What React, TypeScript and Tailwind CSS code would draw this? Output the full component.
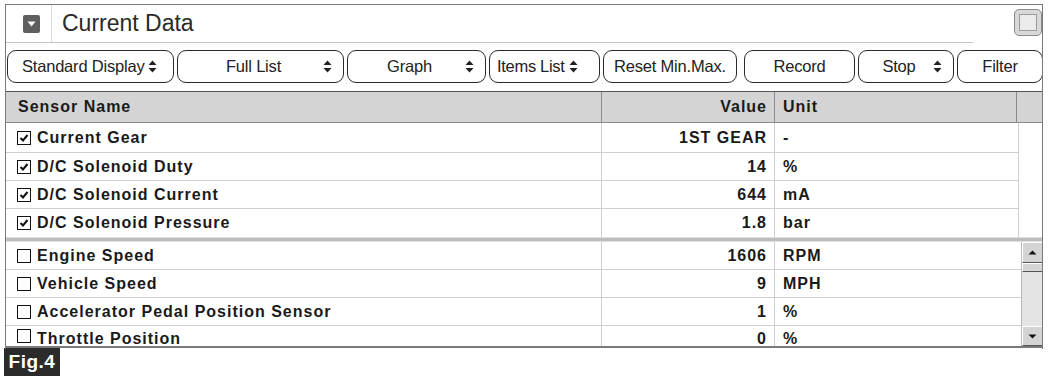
import React from "react";

const Arrows = () => (
  <svg width="9" height="13" viewBox="0 0 9 13" className="shrink-0">
    <path d="M4.5 0.5 L8.5 5 L0.5 5 Z" fill="#222" />
    <path d="M4.5 12.5 L8.5 8 L0.5 8 Z" fill="#222" />
  </svg>
);

const Btn = ({ label, w, drop, align = "center" }: { label: string; w: number; drop?: boolean; align?: string }) => (
  <div
    className="h-[33px] shrink-0 rounded-[9px] border border-[#2a2a2a] flex items-center text-[16.5px] text-[#222] bg-white tracking-[-0.2px]"
    style={{ width: w }}
  >
    {drop ? (
      align === "left" ? (
        <div className="flex items-center gap-[4px] pl-[14px]">
          <span>{label}</span>
          <Arrows />
        </div>
      ) : (
        <>
          <span className="flex-1 text-center pl-[6px]">{label}</span>
          <span className="pr-[11px] flex"><Arrows /></span>
        </>
      )
    ) : (
      <span className="flex-1 text-center">{label}</span>
    )}
  </div>
);

const Check = ({ on }: { on: boolean }) => (
  <div className="w-[14px] h-[14px] border-[1.5px] border-[#111] bg-white flex items-center justify-center shrink-0">
    {on && (
      <svg width="10" height="10" viewBox="0 0 10 10">
        <path d="M1.5 5 L4 7.5 L8.5 2" stroke="#111" strokeWidth="2" fill="none" />
      </svg>
    )}
  </div>
);

const Row = ({ name, value, unit, on, last, h = 28, top }: { name: string; value: string; unit: string; on: boolean; last?: boolean; h?: number; top?: boolean }) => (
  <div className={`flex ${last ? "" : "border-b border-[#cfcfcf]"} ${top ? "items-start" : ""}`} style={{ height: h + (last ? 0 : 1) }}>
    <div className={`w-[597px] h-full flex gap-[6px] pl-[12px] border-r border-[#cfcfcf] ${top ? "items-start pt-[3px]" : "items-center"}`}>
      <Check on={on} />
      <span className={top ? "-mt-[2px]" : ""}>{name}</span>
    </div>
    <div className={`w-[173px] h-full flex justify-end pr-[7px] border-r border-[#cfcfcf] ${top ? "items-start pt-[1px]" : "items-center"}`}>{value}</div>
    <div className={`flex-1 h-full flex pl-[8px] ${top ? "items-start pt-[1px]" : "items-center"}`}>{unit}</div>
  </div>
);

export default function App() {
  return (
    <div className="w-[1050px] h-[381px] bg-white relative overflow-hidden" style={{ fontFamily: "'Liberation Sans', Arial, sans-serif" }}>
      <div className="absolute left-[5px] top-[4px] w-[1038px] h-[345px] border-l border-t border-r border-[#7a7a7a]" />
      <div className="pl-[5px] pt-[5px] w-[1043px]">
        {/* title row */}
        <div className="flex h-[38px]">
          <div className="w-[968px] flex items-center border-b border-[#c4c4c4]">
            <div className="w-[47px] flex justify-center h-full items-center border-r border-[#dcdcdc]">
              <div className="w-[17px] h-[18px] bg-[#5f5f5f] rounded-[2px] flex items-center justify-center ml-[6px]">
                <svg width="9" height="6" viewBox="0 0 9 6"><path d="M0.5 0.5 L8.5 0.5 L4.5 5.5 Z" fill="#fff" /></svg>
              </div>
            </div>
            <span className="pl-[10px] text-[23px] text-[#2a2a2a] leading-none">Current Data</span>
          </div>
          <div className="ml-auto mr-[1px] mt-[4px] w-[28px] h-[27px] rounded-[5px] border border-[#8a8a8a] bg-[#d8d8d8] flex items-center justify-center">
            <div className="w-[18px] h-[17px] border border-[#9a9a9a] bg-[#ebebeb]" />
          </div>
        </div>
        {/* buttons */}
        <div className="flex mt-[7px] pl-[2px] gap-[3px]">
          <Btn label="Standard Display" w={167} drop align="left" />
          <Btn label="Full List" w={167} drop />
          <Btn label="Graph" w={139} drop />
          <div className="h-[33px] w-[111px] shrink-0 rounded-[9px] border border-[#2a2a2a] flex items-center gap-[4px] pl-[7px] text-[16.5px] text-[#222] tracking-[-0.3px]">
            <span>Items List</span>
            <Arrows />
          </div>
          <Btn label="Reset Min.Max." w={134} />
          <div className="w-[2px]" />
          <Btn label="Record" w={111} />
          <Btn label="Stop" w={96} drop />
          <Btn label="Filter" w={86} />
        </div>
        {/* table */}
        <div className="mt-[8px] border-t border-[#555] text-[16px] font-bold text-[#1a1a1a] tracking-[1px]">
          <div className="flex h-[31px] bg-[#d4d4d4] border-b border-[#8a8a8a]">
            <div className="w-[597px] flex items-center pl-[13px] border-r border-[#8a8a8a]">Sensor Name</div>
            <div className="w-[173px] flex items-center justify-end pr-[7px] border-r border-[#8a8a8a]">Value</div>
            <div className="w-[242px] flex items-center pl-[8px] border-r border-[#8a8a8a]">Unit</div>
            <div className="flex-1" />
          </div>
          <div className="flex">
            <div className="w-[1013px]">
              <Row name="Current Gear" value="1ST GEAR" unit="-" on h={29} />
              <Row name="D/C Solenoid Duty" value="14" unit="%" on h={27} />
              <Row name="D/C Solenoid Current" value="644" unit="mA" on h={27} />
              <Row name="D/C Solenoid Pressure" value="1.8" unit="bar" on last h={28} />
            </div>
            <div className="flex-1 border-l border-[#cfcfcf]" />
          </div>
          <div className="h-[5px] bg-[#bdbdbd] border-t border-[#e0e0e0] border-b border-[#777]" />
          <div className="flex h-[106px] border-b-2 border-[#7a7a7a] overflow-hidden">
            <div className="w-[1016px]">
              <Row name="Engine Speed" value="1606" unit="RPM" on={false} h={27} />
              <Row name="Vehicle Speed" value="9" unit="MPH" on={false} h={27} />
              <Row name="Accelerator Pedal Position Sensor" value="1" unit="%" on={false} h={27} />
              <Row name="Throttle Position" value="0" unit="%" on={false} last h={22} top />
            </div>
            <div className="flex-1 flex flex-col bg-[#e6e6e6] border-l border-[#bbb]">
              <div className="h-[21px] bg-[#d4d4d4] border border-t-white border-l-white border-r-[#555] border-b-[#555] flex items-center justify-center">
                <svg width="9" height="5" viewBox="0 0 9 5"><path d="M0.5 4.5 L8.5 4.5 L4.5 0.5 Z" fill="#111" /></svg>
              </div>
              <div className="h-[9px] bg-[#d4d4d4] border border-t-white border-l-white border-r-[#555] border-b-[#555]" />
              <div className="flex-1 bg-[#e4e4e4]" />
              <div className="h-[20px] bg-[#d4d4d4] border border-t-white border-l-white border-r-[#555] border-b-[#555] flex items-center justify-center">
                <svg width="9" height="5" viewBox="0 0 9 5"><path d="M0.5 0.5 L8.5 0.5 L4.5 4.5 Z" fill="#111" /></svg>
              </div>
            </div>
          </div>
        </div>
      </div>
      <div className="ml-[4px] mt-[0px] w-[56px] h-[28px] bg-[#2b2b2b] text-white font-bold text-[19px] flex items-center justify-center tracking-[0.5px]">
        Fig.4
      </div>
    </div>
  );
}
